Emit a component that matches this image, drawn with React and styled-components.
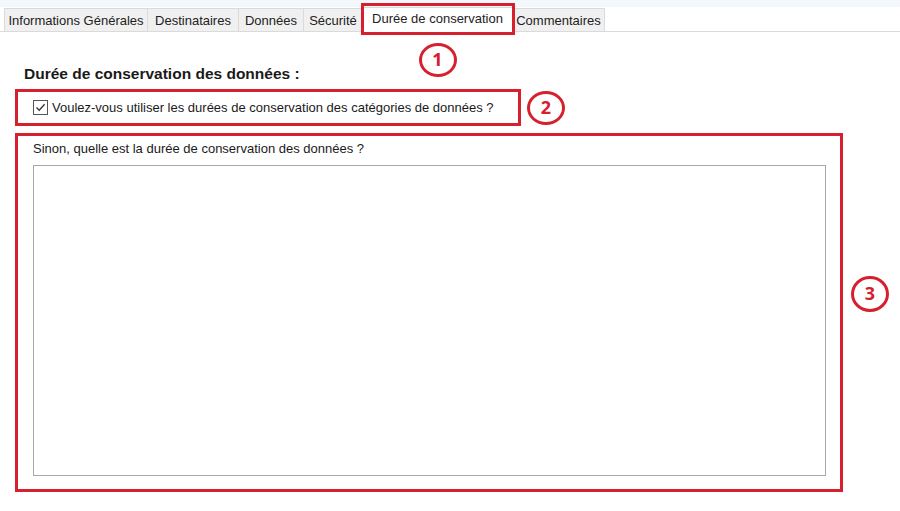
import React from 'react';
import styled, { createGlobalStyle, css } from 'styled-components';

const RED = '#d7202e';

const GlobalStyle = createGlobalStyle`
  html, body {
    margin: 0;
    padding: 0;
    background: #ffffff;
    font-family: "Liberation Sans", Arial, sans-serif;
    color: #1a1a1a;
  }
`;

const Page = styled.div`
  width: 900px;
  height: 511px;
  background: #ffffff;
  overflow: hidden;
`;

const TopStrip = styled.div`
  height: 7px;
  background: #f3f8fc;
`;

const TabBar = styled.div`
  display: flex;
  align-items: flex-end;
  height: 24px;
  padding-left: 4px;
  border-bottom: 1px solid #dadada;
`;

const Tab = styled.div`
  position: relative;
  box-sizing: border-box;
  width: ${p => p.$w}px;
  height: 23px;
  line-height: 23px;
  text-align: center;
  font-size: 13px;
  color: #222;
  background: #f0f0f0;
  border: 1px solid #dadada;
  border-bottom: none;
  margin-right: -1px;
  white-space: nowrap;

  ${p => p.$active && css`
    background: #ffffff;
    height: 25px;
    line-height: 21px;
    margin-bottom: -1px;
    z-index: 1;
  `}
`;

const Highlight = styled.span`
  position: absolute;
  left: -2px;
  right: -3px;
  top: -5px;
  bottom: -3px;
  border: 3px solid ${RED};
  pointer-events: none;
`;

const Marker = styled.span`
  position: absolute;
  box-sizing: border-box;
  width: 38px;
  height: ${p => p.$h || 34}px;
  border: 3.5px solid ${RED};
  border-radius: 50%;
  color: ${RED};
  font-family: "Open Sans", "Liberation Sans", sans-serif;
  font-weight: 700;
  font-size: 18px;
  line-height: ${p => (p.$h || 34) - 7}px;
  text-align: center;
  background: #ffffff;
  ${p => p.$place === 'below' && css`
    left: 50%;
    top: 35px;
    transform: translateX(-50%);
  `}
  ${p => p.$place === 'right' && css`
    left: calc(100% + 9px);
    top: 50%;
    transform: translateY(-50%);
  `}
  ${p => p.$place === 'side' && css`
    left: calc(100% + 11px);
    top: 50%;
    transform: translateY(calc(-50% - 19px));
  `}
`;

const Content = styled.div`
  padding: 33px 0 0 15px;
`;

const Heading = styled.h2`
  margin: 0 0 6px 9px;
  font-size: 15.5px;
  line-height: 18px;
  font-weight: 700;
  color: #1a1a1a;
`;

const AnnotatedBox = styled.div`
  position: relative;
  box-sizing: border-box;
  border: 3px solid ${RED};
  width: ${p => p.$width}px;
  height: ${p => p.$height}px;
`;

const CheckRow = styled.label`
  display: flex;
  align-items: center;
  gap: 4px;
  height: 100%;
  padding-left: 15px;
  font-size: 13px;
  color: #1a1a1a;
`;

const CheckBox = styled.span`
  display: inline-flex;
  align-items: center;
  justify-content: center;
  width: 13px;
  height: 13px;
  border: 1px solid #555;
  background: #fff;
`;

const Gap = styled.div`
  height: 7px;
`;

const Field = styled.div`
  display: flex;
  flex-direction: column;
  padding: 5px 14px 0 15px;
`;

const FieldLabel = styled.div`
  font-size: 13px;
  line-height: 16px;
  color: #1a1a1a;
  margin-bottom: 8px;
`;

const TextArea = styled.div`
  box-sizing: border-box;
  height: 311px;
  border: 1px solid #a8a8a8;
  background: #ffffff;
`;

const tabs = [
  { label: 'Informations Générales', w: 144 },
  { label: 'Destinataires', w: 92 },
  { label: 'Données', w: 66 },
  { label: 'Sécurité', w: 60 },
  { label: 'Durée de conservation', w: 151, active: true },
  { label: 'Commentaires', w: 93 },
];

export default function App() {
  return (
    <Page>
      <GlobalStyle />
      <TopStrip />
      <TabBar>
        {tabs.map(t => (
          <Tab key={t.label} $w={t.w} $active={t.active}>
            {t.label}
            {t.active && (
              <>
                <Highlight />
                <Marker $place="below">1</Marker>
              </>
            )}
          </Tab>
        ))}
      </TabBar>
      <Content>
        <Heading>Durée de conservation des données :</Heading>
        <AnnotatedBox $width={506} $height={37}>
          <CheckRow>
            <CheckBox>
              <svg width="11" height="11" viewBox="0 0 11 11">
                <path d="M1.5 5.5 L4.2 8.3 L9.6 2.2" fill="none" stroke="#333" strokeWidth="1.3" />
              </svg>
            </CheckBox>
            Voulez-vous utiliser les durées de conservation des catégories de données ?
          </CheckRow>
          <Marker $place="right">2</Marker>
        </AnnotatedBox>
        <Gap />
        <AnnotatedBox $width={828} $height={359}>
          <Field>
            <FieldLabel>Sinon, quelle est la durée de conservation des données ?</FieldLabel>
            <TextArea />
          </Field>
          <Marker $place="side" $h={36}>3</Marker>
        </AnnotatedBox>
      </Content>
    </Page>
  );
}
